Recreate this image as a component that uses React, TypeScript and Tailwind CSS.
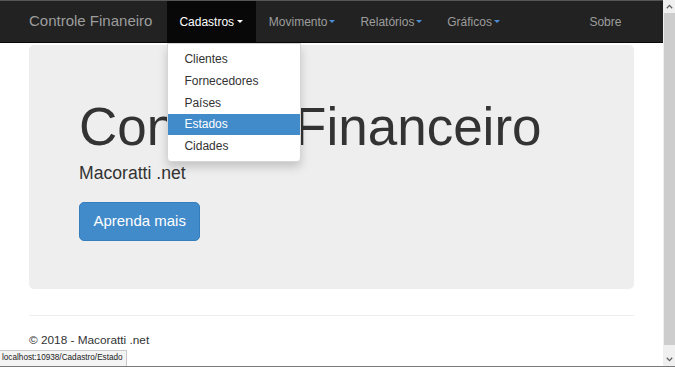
import React from 'react'

const menu = ['Clientes', 'Fornecedores', 'Países', 'Estados', 'Cidades']

function Caret({ blue }: { blue?: boolean }) {
  return (
    <span
      className={`inline-block align-middle w-0 h-0 border-t-[3.5px] border-x-[3.5px] border-x-transparent ${
        blue ? 'border-t-[#4a8fd6]' : 'border-t-white'
      }`}
    />
  )
}

export default function App() {
  return (
    <div className="w-[675px] h-[367px] flex flex-col bg-white overflow-hidden font-['Liberation_Sans',Arial,sans-serif] text-[#333]">
      <div className="flex flex-1 min-h-0">
        {/* page */}
        <div className="relative flex-1 min-w-0">
          <nav className="h-[43px] bg-[#222] border-t border-t-[#555] border-b border-b-[#080808]">
            <div className="mx-auto w-[630px] px-[12.5px] h-full flex items-stretch">
              <span className="flex items-center pr-[14.2px] text-[15px] text-[#9d9d9d]">Controle Finaneiro</span>
              <ul className="flex items-stretch text-[12px]">
                <li className="relative flex items-center px-[12.8px] bg-[#080808] text-white">
                  Cadastros&nbsp;<Caret />
                  <div className="absolute left-0 top-[42px] w-[134px] bg-white border border-[#d6d6d6] rounded-b-[4px] shadow-[0_5px_10px_rgba(0,0,0,0.18)] py-[4.2px] z-10">
                    {menu.map((m) => (
                      <div
                        key={m}
                        className={`h-[21.8px] flex items-center px-[16.8px] text-[12px] ${
                          m === 'Estados' ? 'bg-[#428bca] text-white' : 'text-[#333]'
                        }`}
                      >
                        {m}
                      </div>
                    ))}
                  </div>
                </li>
                <li className="flex items-center px-[12.6px] text-[#9d9d9d] gap-[1.7px]">
                  Movimento<Caret blue />
                </li>
                <li className="flex items-center px-[12.6px] text-[#9d9d9d] gap-[1.7px]">
                  Relatórios<Caret blue />
                </li>
                <li className="flex items-center px-[12.6px] text-[#9d9d9d] gap-[1.7px]">
                  Gráficos<Caret blue />
                </li>
              </ul>
              <span className="ml-auto flex items-center px-[12.6px] text-[12px] text-[#9d9d9d]">Sobre</span>
            </div>
          </nav>

          <main className="mx-auto w-[630px] px-[12.5px]">
            <div className="mt-[2px] rounded-[5px] bg-[#eee] px-[50px] pt-[52.5px] pb-[48px]">
              <h1 className="text-[53px] leading-[58px] text-[#333]">Controle Financeiro</h1>
              <p className="mt-[5.5px] text-[17.6px] leading-[25px]">Macoratti .net</p>
              <button className="mt-[16px] h-[39px] px-[13.4px] rounded-[5px] bg-[#428bca] border border-[#357ebd] text-white text-[15px]">
                Aprenda mais
              </button>
            </div>
            <hr className="mt-[26px] border-t border-[#eee]" />
            <footer className="mt-[16.3px] text-[11.8px] leading-[17px]">© 2018 - Macoratti .net</footer>
          </main>

          <div className="absolute left-0 bottom-0 h-[16px] w-[127px] bg-[#f4f4f4] border-t border-r border-[#c9c9c9] flex items-center pl-[2px] text-[8.2px] text-[#222] whitespace-nowrap">
            localhost:10938/Cadastro/Estado
          </div>
        </div>

        {/* scrollbar */}
        <div className="w-[12px] flex flex-col bg-[#f0f0f0]">
          <div className="h-[12.7px] flex items-center justify-center">
            <svg width="7" height="5" viewBox="0 0 7 5">
              <path d="M0.8 4.2 L3.5 1.4 L6.2 4.2" fill="none" stroke="#606060" strokeWidth="1.3" />
            </svg>
          </div>
          <div className="flex-1 ml-px bg-[#cdcdcd]" />
          <div className="h-[21px] flex items-end justify-center pb-[4px]">
            <svg width="7" height="5" viewBox="0 0 7 5">
              <path d="M0.8 0.8 L3.5 3.6 L6.2 0.8" fill="none" stroke="#606060" strokeWidth="1.3" />
            </svg>
          </div>
        </div>
      </div>
      <div className="h-px bg-[#7a7a7a]" />
    </div>
  )
}
